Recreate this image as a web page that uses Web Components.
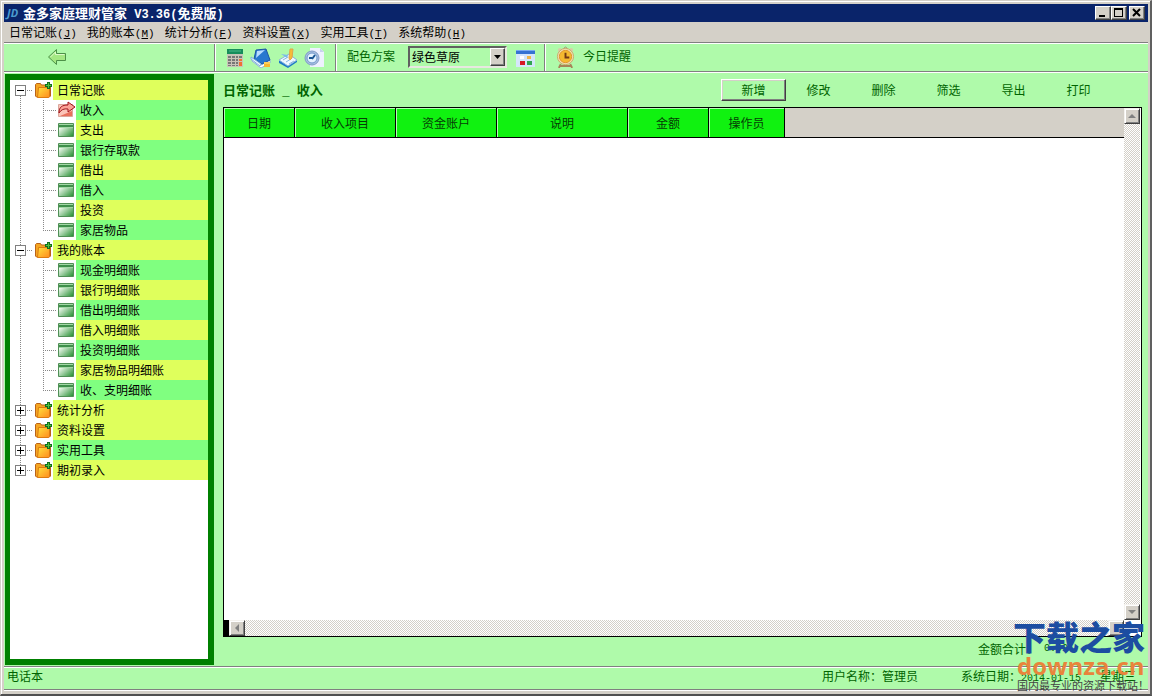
<!DOCTYPE html>
<html lang="zh-CN">
<head>
<meta charset="utf-8">
<title>金多家庭理财管家</title>
<style>
  html, body { margin: 0; height: 100%; }
  body { font: 12px/20px "Noto Sans CJK SC", sans-serif; color: #000; --face: #d4d0c8; --mint: #affaaa; --ink: #006400; background: #d4d0c8; }
</style>
</head>
<body>
<app-window></app-window>

<template id="t-window">
  <style>
    :host { display: flex; flex-direction: column; box-sizing: border-box; min-height: 100vh; background: var(--face);
      padding: 3px 2px 2px 3px; border: 1px solid var(--face); border-right: 2px solid #606060; border-bottom: 2px solid #505050; box-shadow: inset 1px 1px #fff; }
    nav { display: flex; gap: 10px; height: 20px; padding-left: 5px; }
    .rule { height: 1px; background: #808080; border-bottom: 1px solid #fff; }
    main { flex: 1; display: flex; gap: 9px; background: var(--mint); padding: 1px 6px 1px 1px; }
    section { flex: 1; min-width: 0; display: flex; flex-direction: column; }
    .bar { display: flex; box-sizing: border-box; height: 33px; align-items: center; padding: 0 31px 2px 0; }
    h1 { margin: 0; flex: 1; font-size: 13px; line-height: 20px; color: var(--ink); white-space: pre; }
    h1 span { font: 12px "Liberation Mono", monospace; font-weight: bold; }
    .sum { height: 28px; line-height: 24px; color: var(--ink); display: flex; justify-content: flex-end; gap: 6px; padding-right: 74px; }
    .num { font: 10px/24px "Liberation Mono", monospace; }
  </style>
  <title-bar></title-bar>
  <nav aria-label="主菜单">
    <menu-item key="J">日常记账</menu-item><menu-item key="M">我的账本</menu-item><menu-item key="F">统计分析</menu-item><menu-item key="X">资料设置</menu-item><menu-item key="T">实用工具</menu-item><menu-item key="H">系统帮助</menu-item>
  </nav>
  <div class="rule"></div>
  <tool-bar></tool-bar>
  <div class="rule"></div>
  <main>
    <side-tree>
      <tree-group first open label="日常记账">
        <tree-leaf current>收入</tree-leaf><tree-leaf alt>支出</tree-leaf><tree-leaf>银行存取款</tree-leaf><tree-leaf alt>借出</tree-leaf><tree-leaf>借入</tree-leaf><tree-leaf alt>投资</tree-leaf><tree-leaf last>家居物品</tree-leaf>
      </tree-group>
      <tree-group open label="我的账本">
        <tree-leaf>现金明细账</tree-leaf><tree-leaf alt>银行明细账</tree-leaf><tree-leaf>借出明细账</tree-leaf><tree-leaf alt>借入明细账</tree-leaf><tree-leaf>投资明细账</tree-leaf><tree-leaf alt>家居物品明细账</tree-leaf><tree-leaf last>收、支明细账</tree-leaf>
      </tree-group>
      <tree-group label="统计分析"></tree-group>
      <tree-group label="资料设置"></tree-group>
      <tree-group green label="实用工具"></tree-group>
      <tree-group last label="期初录入"></tree-group>
    </side-tree>
    <section>
      <div class="bar">
        <h1>日常记账<span> _ </span>收入</h1>
        <flat-button raised>新增</flat-button><flat-button>修改</flat-button><flat-button>删除</flat-button><flat-button>筛选</flat-button><flat-button>导出</flat-button><flat-button>打印</flat-button>
      </div>
      <record-grid></record-grid>
      <div class="sum"><span>金额合计：</span><span class="num">0.00</span></div>
    </section>
  </main>
  <div class="rule"></div>
  <status-bar></status-bar>
  <site-mark></site-mark>
</template>

<template id="t-title">
  <style>
    :host { display: flex; align-items: center; height: 18px; background: #0a246a; color: #fff; padding: 0 3px 0 3px; font: bold 13px/18px "Noto Sans CJK SC", sans-serif; }
    .logo { width: 16px; font: italic bold 11px/18px "Open Sans", sans-serif; color: #4a9bd0; }
    .name { flex: 1; white-space: pre; }
    .name span { font: bold 12px "Liberation Mono", monospace; }
    button { width: 16px; height: 14px; padding: 0; border: 1px solid; border-color: #fff #404040 #404040 #fff; background: var(--face); box-shadow: inset -1px -1px #808080; display: block; }
    button:last-of-type { margin-left: 2px; }
    svg { display: block; }
  </style>
  <span class="logo">JD</span>
  <div class="name">金多家庭理财管家<span> V3.36(</span>免费版<span>)</span></div>
  <button aria-label="最小化"><svg width="14" height="12"><path d="M3 8h6v2H3z"/></svg></button>
  <button aria-label="最大化"><svg width="14" height="12"><path d="M2 1h9v9H2zM3 3v6h7V3z" fill-rule="evenodd"/></svg></button>
  <button aria-label="关闭"><svg width="14" height="12"><path d="M3 2l7 7M10 2L3 9" stroke="#000" stroke-width="2"/></svg></button>
</template>

<template id="t-menu">
  <style>
    :host { display: block; }
    button { all: unset; display: block; white-space: nowrap; line-height: 20px; }
    span { font: 11px/20px "Liberation Mono", monospace; }
  </style>
  <button><slot></slot><span>(<u></u>)</span></button>
</template>

<template id="t-tools">
  <style>
    :host { display: flex; height: 27px; background: var(--mint); color: var(--ink); }
    .cell { display: flex; align-items: center; box-sizing: border-box; border-right: 1px solid #808080; box-shadow: 1px 0 #fff; }
    .back { width: 211px; padding-left: 43px; padding-bottom: 2px; }
    .icons { width: 121px; padding-left: 11px; gap: 6px; }
    .scheme { width: 209px; padding-left: 11px; padding-bottom: 2px; gap: 9px; }
    .last { flex: 1; border: 0; box-shadow: none; padding-left: 11px; padding-bottom: 2px; }
    button { all: unset; display: block; height: 21px; }
    svg { display: block; }
    label { display: flex; gap: 13px; line-height: 20px; }
    .today { display: flex; gap: 8px; line-height: 20px; height: 22px; }
    .drop { position: relative; display: block; width: 99px; height: 22px; }
    select { appearance: none; box-sizing: border-box; width: 100%; height: 22px; margin: 0; padding: 0 0 0 2px; border: 2px solid; border-color: #606060 #e8e8e0 #e8e8e0 #606060; border-radius: 0; background: var(--mint); color: #000; font: 12px/18px "Noto Sans CJK SC", sans-serif; display: block; }
    .arrow { position: absolute; right: 2px; top: 2px; pointer-events: none; box-sizing: border-box; width: 15px; height: 18px; background: var(--face); border: 1px solid; border-color: #fff #404040 #404040 #fff; box-shadow: inset -1px -1px #808080; }
  </style>
  <div class="cell back"><button aria-label="返回">
    <svg width="20" height="20" viewBox="0 0 20 20"><path d="M1.500 10L9.500 2.500V6.500H18.500v7H9.500v4z" fill="#a4e883" stroke="#4c9148"/><path d="M3.500 10l5-5v2.500h9" fill="none" stroke="#dcfbc9"/></svg>
  </button></div>
  <div class="cell icons">
    <button aria-label="计算器"><svg width="18" height="20" viewBox="0 0 18 20"><path d="M1 1h16v18H1z" fill="#c9c4b8"/><path d="M1 1h16v5H1z" fill="#178d5b"/><path d="M3 3h12" stroke="#4cb98a"/><g fill="#777"><path d="M2 8h3v2H2zm4 0h3v2H6zM2 11h3v2H2zm4 0h3v2H6zM2 14h3v2H2zm4 0h3v2H6zM2 17h3v1H2zm4 0h3v1H6zM10 8h2v2h-2zm0 3h2v2h-2zm0 3h2v2h-2zm0 3h2v1h-2z"/></g><path d="M13 11h3v2h-3zm0 3h3v4h-3z" fill="#ef7135"/><path d="M13 8h3v2h-3z" fill="#777"/></svg></button>
    <button aria-label="通讯录"><svg width="22" height="20" viewBox="0 0 22 20"><path d="M2 10l9 7 9-5v3l-9 5-9-7z" fill="#fff" stroke="#8fb0d8"/><path d="M6 2l10-1 4 11-8 4-8-5z" fill="#2878cf" stroke="#1b53a4"/><path d="M7 3l8-1-9 8z" fill="#b8dcff"/><path d="M1 9l10 7-1 2-9-7z" fill="#eef7ff" stroke="#7fb0de"/><path d="M14 14h6v5h-6z" fill="#f8b82f"/><path d="M14 15h6" stroke="#ffe78d"/></svg></button>
    <button aria-label="记事本"><svg width="20" height="20" viewBox="0 0 20 20"><path d="M1 13L11 6l8 6v2l-9 6-9-5z" fill="#1c78c7"/><path d="M1 12l10-6 8 6-9 6z" fill="#eef7ff" stroke="#88b7dc"/><path d="M5 12l5-3m-2 5l5-3m-2 5l5-3" stroke="#8bb7df"/><path d="M3 6l7 1-1 3z" fill="#7cbbe8"/><path d="M12 1h3l-1 9-2 2-1-2z" fill="#f7bc36" stroke="#e0a44a"/></svg></button>
    <button aria-label="定时"><svg width="20" height="20" viewBox="0 0 20 20"><path d="M6 0h10l4 4v15H6z" fill="#eef1ff"/><path d="M16 0v4h4" fill="#c9d1ee"/><circle cx="8" cy="10" r="7" fill="#a9bfdf" stroke="#7f9cc8"/><circle cx="8" cy="10" r="5" fill="#e4f2ff" stroke="#6f97cc"/><path d="M8 11l3-4M8 10H5" stroke="#185593" stroke-width="2"/></svg></button>
  </div>
  <div class="cell scheme">
    <label>配色方案
      <span class="drop"><select><option>绿色草原</option></select><span class="arrow"><svg width="13" height="16"><path d="M3 6h7L6.500 10z"/></svg></span></span>
    </label>
    <button aria-label="配色设置"><svg width="19" height="20" viewBox="0 0 19 20"><path d="M0 3h19v17H0z" fill="#d5e6fb"/><path d="M0 3h19v4H0z" fill="#3572d2"/><path d="M0 3.500h19" stroke="#79aaf0"/><path d="M4 9h4v3H4z" fill="#fff"/><path d="M11 9h4v3h-4z" fill="#f0b648"/><path d="M4 14h5v4H4z" fill="#d71724"/><path d="M11 14h5v4h-5z" fill="#32a451"/></svg></button>
  </div>
  <div class="cell last"><button class="today">
    <svg width="19" height="22" viewBox="0 0 20 23"><path d="M5 19l-2 4m12-4l2 4M4 21h12" stroke="#a78458" stroke-width="2"/><path d="M8 3q2-4 4 0" fill="none" stroke="#9b8f74"/><circle cx="4" cy="4" r="2" fill="#d8cba8"/><circle cx="16" cy="4" r="2" fill="#d8cba8"/><circle cx="10" cy="11" r="8.500" fill="#f2e2b4" stroke="#c9a566"/><circle cx="10" cy="11" r="6.500" fill="#f4b92f" stroke="#e0952c"/><path d="M10 7v5h4" fill="none" stroke="#723813" stroke-width="2"/></svg>今日提醒</button></div>
</template>

<template id="t-side">
  <style>:host { display: block; width: 198px; border: 6px solid #008000; border-left-width: 5px; background: #fff; }</style>
  <slot></slot>
</template>

<template id="t-group">
  <style>
    :host { display: block; }
    .row { display: flex; height: 20px; }
    .name { flex: 1; margin-left: 1px; padding-left: 4px; background: #dfff5c; line-height: 20px; }
    :host([green]) .name { background: #80ff80; }
    :host(:not([open])) slot { display: none; }
    button { all: unset; display: block; width: 25px; height: 20px; }
    svg { display: block; }
    :host([open]) .plus, :host([first]) .up, :host([last]) .down { display: none; }
  </style>
  <div class="row">
    <button aria-label="展开或折叠"><svg width="25" height="20" shape-rendering="crispEdges"><path class="up" d="M10.500 0v5" stroke="#888" stroke-dasharray="1 1"/><path class="down" d="M10.500 16v4" stroke="#888" stroke-dasharray="1 1"/><path d="M17 10.500h6" stroke="#888" stroke-dasharray="1 1"/><path d="M5.500 5.500h10v10h-10z" fill="#fff" stroke="#808080"/><path d="M7 10.500h7" stroke="#000"/><path class="plus" d="M10.500 7v7" stroke="#000"/></svg></button>
    <svg width="17" height="20" viewBox="0 0 17 20" aria-hidden="true"><defs><linearGradient id="f" x2="1" y2="1"><stop stop-color="#ffe23c"/><stop offset="1" stop-color="#ff8a1c"/></linearGradient></defs><path d="M.5 4.500l1-1h4l1 1.500h9v11l-1 1H1.500l-1-1z" fill="#f5a623" stroke="#b8621a"/><path d="M3.500 7.500h11v9l-1 1h-11z" fill="url(#f)" stroke="#dc7a10"/><path d="M12 2h3v2h2v3h-2v2h-3V7h-2V4h2z" fill="#12701c"/><path d="M13 3h1v2h2v1h-2v2h-1V6h-2V5h2z" fill="#4fc43e"/></svg>
    <div class="name"></div>
  </div>
  <slot></slot>
</template>

<template id="t-leaf">
  <style>
    :host { display: flex; height: 20px; }
    svg { display: block; }
    .name { flex: 1; margin-left: 2px; padding-left: 4px; background: #80ff80; line-height: 20px; }
    :host([alt]) .name { background: #dfff5c; }
    .arrow, :host([current]) .book, :host([last]) .down { display: none; }
    :host([current]) .arrow { display: block; overflow: visible; }
  </style>
  <svg width="48" height="20" shape-rendering="crispEdges"><g stroke="#888" stroke-dasharray="1 1"><path d="M10.500 0v20M33.500 0v10M33 10.500h14"/><path class="down" d="M33.500 10v10"/></g></svg>
  <svg class="book" width="16" height="20" viewBox="0 0 16 20" aria-hidden="true"><defs><linearGradient id="g" x2="1" y2="1"><stop offset=".2" stop-color="#f4fbf2"/><stop offset="1" stop-color="#1e8b2b"/></linearGradient></defs><path d="M.5 3.500h15v13H.5z" fill="url(#g)" stroke="#4f8f55"/><path d="M1 4h14v3H1z" fill="#3f8f4b"/><path d="M1 4.500h14M1 7.500h14" stroke="#a3d7a6"/></svg>
  <svg class="arrow" width="16" height="20" viewBox="0 0 16 20" aria-hidden="true"><path d="M.5 4.500h14v12H.5z" fill="#fbc4b8" stroke="#dba79c"/><path d="M2 16h12v-5z" fill="#e8705c"/><path d="M1 13C1 7 4 5 10 5V2l7 5-7 5V9Q4 8 1 13z" fill="#fba196" stroke="#a0141c"/></svg>
  <div class="name"><slot></slot></div>
</template>

<template id="t-button">
  <style>
    :host { display: block; }
    button { box-sizing: border-box; display: block; width: 65px; height: 22px; padding: 0; border: 1px solid transparent; background: none; color: var(--ink); font: inherit; line-height: 20px; }
    :host([raised]) button { border-color: #fff #404040 #404040 #fff; box-shadow: inset -1px -1px #808080, inset 1px 1px var(--face); }
  </style>
  <button><slot></slot></button>
</template>

<template id="t-grid">
  <style>
    :host { flex: 1; display: grid; grid-template: 1fr 16px / 1fr 16px; padding-right: 1px; border: 1px solid #000; background: #fff; }
    .head { background: linear-gradient(var(--face) 29px, #000 29px, #000 30px, #fff 30px); min-width: 0; }
    table { border-collapse: separate; border-spacing: 0; table-layout: fixed; width: 561px; }
    th { box-sizing: border-box; height: 30px; padding: 0; font-weight: normal; background: #10f210; color: #063c06; border-right: 1px solid #000; border-bottom: 1px solid #000; box-shadow: inset 1px 1px #b4ffb4; }
    .v, .h { display: flex; justify-content: space-between; background: repeating-conic-gradient(#d4d0c8 0 25%, #fff 0 50%) 0 0 / 2px 2px; }
    .v { flex-direction: column; }
    .h { border-left: 5px solid #000; }
    button { box-sizing: border-box; display: block; width: 16px; height: 16px; padding: 0; border: 1px solid; border-color: #f4f2ee #404040 #404040 #f4f2ee; background: var(--face); box-shadow: inset 1px 1px #fff, inset -1px -1px #808080; }
    svg { display: block; fill: #808080; }
  </style>
  <div class="head"><table>
    <colgroup><col style="width:71px"><col style="width:101px"><col style="width:101px"><col style="width:131px"><col style="width:81px"><col style="width:76px"></colgroup>
    <thead><tr><th scope="col">日期</th><th scope="col">收入项目</th><th scope="col">资金账户</th><th scope="col">说明</th><th scope="col">金额</th><th scope="col">操作员</th></tr></thead>
  </table></div>
  <div class="v"><button aria-label="向上"><svg width="14" height="14"><path d="M3 9h8L7 5z"/></svg></button><button aria-label="向下"><svg width="14" height="14"><path d="M3 5h8L7 9z"/></svg></button></div>
  <div class="h"><button aria-label="向左"><svg width="14" height="14"><path d="M9 3v8L5 7z"/></svg></button><button aria-label="向右"><svg width="14" height="14"><path d="M5 3v8l4-4z"/></svg></button></div>
</template>

<template id="t-status">
  <style>
    :host { display: flex; height: 21px; line-height: 16px; background: var(--mint); color: var(--ink); padding: 0 12px 0 3px; border-bottom: 1px solid #808080; box-shadow: 0 1px #fff; margin-bottom: 2px; }
    .phone { flex: 1; }
    .user { margin-right: 43px; }
    .day { margin-left: 19px; }
    .num { font: 10px/16px "Liberation Mono", monospace; }
  </style>
  <span class="phone">电话本</span><span class="user">用户名称：管理员</span><span>系统日期：<span class="num">2014-01-15</span></span><span class="day">星期三</span>
</template>

<template id="t-mark">
  <style>
    :host { position: absolute; right: 3px; bottom: 5px; width: 136px; white-space: nowrap; pointer-events: none; }
    .cn { font: 900 33px/34px "Noto Sans CJK SC", sans-serif; color: #1c4da1; }
    .url { font: bold 24px/26px "Open Sans", sans-serif; color: #e8843c; margin-left: 4px; }
    .tag { font: 11px/12px "Noto Sans CJK SC", sans-serif; color: #444; margin-left: 4px; }
  </style>
  <div class="cn">下载之家</div><div class="url">downza.cn</div><div class="tag">国内最专业的资源下载站！</div>
</template>

<script>
  class Part extends HTMLElement {
    constructor() {
      super();
      this.attachShadow({ mode: "open" }).append(document.getElementById(this.constructor.template).content.cloneNode(true));
    }
  }
  const define = (name, template, base = Part) =>
    customElements.define(name, class extends base { static template = template; });

  class MenuItem extends Part {
    connectedCallback() { this.shadowRoot.querySelector("u").textContent = this.getAttribute("key"); }
  }
  class TreeGroup extends Part {
    connectedCallback() {
      this.shadowRoot.querySelector(".name").textContent = this.getAttribute("label");
      this.shadowRoot.querySelector("button").onclick = () => this.toggleAttribute("open");
    }
  }
  define("title-bar", "t-title");
  define("menu-item", "t-menu", MenuItem);
  define("tool-bar", "t-tools");
  define("side-tree", "t-side");
  define("tree-group", "t-group", TreeGroup);
  define("tree-leaf", "t-leaf");
  define("flat-button", "t-button");
  define("record-grid", "t-grid");
  define("status-bar", "t-status");
  define("site-mark", "t-mark");
  define("app-window", "t-window");
</script>
</body>
</html>
